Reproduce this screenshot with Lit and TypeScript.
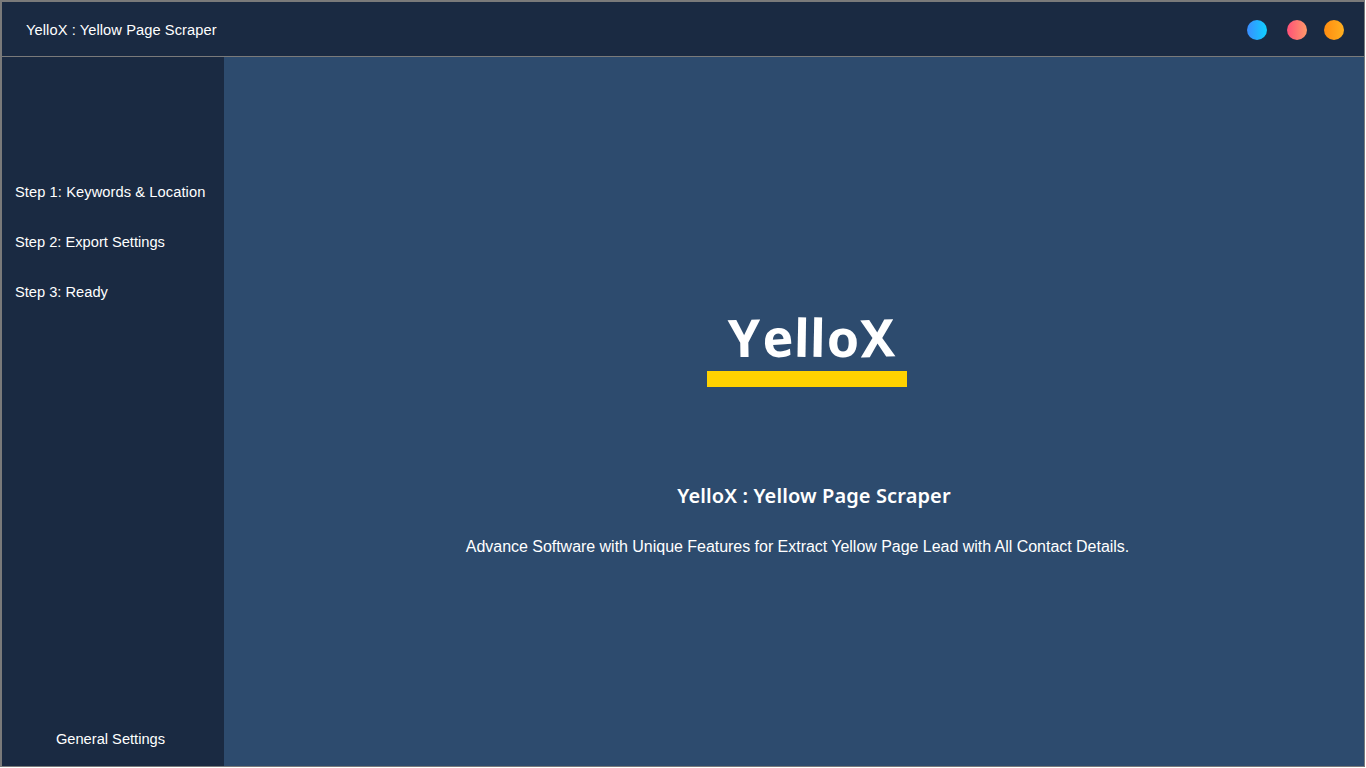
import { LitElement, html, css } from "lit";
import { customElement } from "lit/decorators.js";

@customElement("app-root")
export class AppRoot extends LitElement {
  static styles = css`
    :host { display: block; width: 1366px; height: 768px; background: #fff; font-family: "Liberation Sans", Arial, sans-serif; color: #fff; overflow: hidden; }
    .win { box-sizing: border-box; width: 1365px; height: 767px; border: 2px solid #7a7a7a; border-width: 2px 1px 1px 2px; display: flex; flex-direction: column; background: #2d4b6e; }
    .head { box-sizing: border-box; height: 55px; flex: none; background: #1a2a42; border-bottom: 1px solid #7a7a7a; display: flex; align-items: center; justify-content: space-between; padding: 0 20px 0 24px; font-size: 14.67px; }
    .title { letter-spacing: 0.08px; padding-top: 2px; }
    .dots { display: flex; gap: 20px; padding-top: 2px; }
    .dot { width: 20px; height: 20px; border-radius: 50%; }
    .d1 { background: linear-gradient(to right, #3a8dff, #0fd0ff); }
    .d2 { background: linear-gradient(to right, #ff5078, #ff9a6a); }
    .d3 { background: linear-gradient(to right, #ff8c10, #ffb020); margin-left: -3px; }
    .body { flex: 1; display: flex; min-height: 0; }
    .side { width: 222px; flex: none; background: #1a2a42; display: flex; flex-direction: column; font-size: 14.67px; padding-top: 110px; box-sizing: border-box; }
    .step { height: 50px; display: flex; align-items: center; padding-left: 13px; }
    .wide { letter-spacing: 0.08px; }
    .gen { margin-top: auto; height: 54px; display: flex; align-items: center; justify-content: center; padding-right: 5px; }
    .main { flex: 1; display: flex; flex-direction: column; align-items: center; padding-top: 250px; box-sizing: border-box; }
    .logo { width: 200px; display: flex; flex-direction: column; align-items: center; margin-left: 26px; }
    .mark { font-family: "Noto Sans", sans-serif; font-weight: 700; font-size: 52px; line-height: 60px; letter-spacing: 1px; margin-left: 10px; white-space: nowrap; }
    .mark span { display: inline-block; }
    .ty { transform: rotate(-1deg); }
    .te { transform: rotate(-4deg); }
    .tl { transform: rotate(1deg); }
    .tx { transform: rotate(-2deg); }
    .bar { width: 200px; height: 16px; background: #ffd200; margin-top: 4px; }
    .h { font-family: "Noto Sans", sans-serif; font-weight: 600; font-size: 20px; letter-spacing: 0.11px; margin-top: 95px; margin-left: 40px; line-height: 28px; }
    .p { font-size: 16px; letter-spacing: -0.03px; margin-top: 27px; margin-left: 7px; line-height: 20px; }
  `;
  render() {
    return html`<div class="win">
      <div class="head"><span class="title">YelloX : Yellow Page Scraper</span>
        <div class="dots"><div class="dot d1"></div><div class="dot d2"></div><div class="dot d3"></div></div></div>
      <div class="body">
        <div class="side">
          <div class="step wide">Step 1: Keywords &amp; Location</div>
          <div class="step">Step 2: Export Settings</div>
          <div class="step">Step 3: Ready</div>
          <div class="gen">General Settings</div>
        </div>
        <div class="main">
          <div class="logo"><div class="mark"><span class="ty">Y</span><span class="te">e</span><span class="tl">l</span><span class="tl">l</span><span>o</span><span class="tx">X</span></div><div class="bar"></div></div>
          <div class="h">YelloX : Yellow Page Scraper</div>
          <div class="p">Advance Software with Unique Features for Extract Yellow Page Lead with All Contact Details.</div>
        </div>
      </div>
    </div>`;
  }
}
